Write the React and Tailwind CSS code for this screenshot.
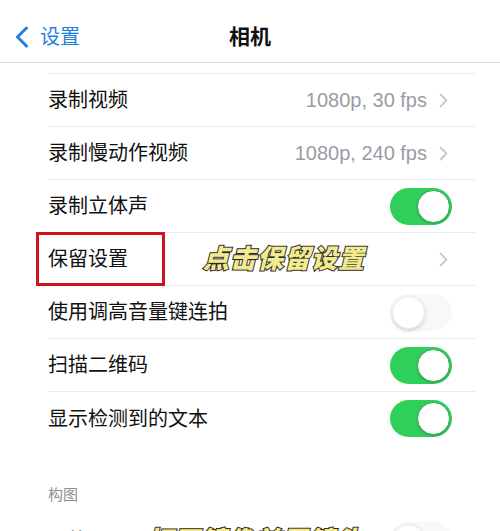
const Chevron = () => (
  <svg width="9" height="15" viewBox="0 0 9 15" className="ml-[12px] mr-[4px]">
    <path d="M1.5 1.5 L7.5 7.5 L1.5 13.5" fill="none" stroke="#c7c7cc" strokeWidth="1.8" strokeLinecap="round" strokeLinejoin="round" />
  </svg>
);

const Toggle = ({ on }) =>
  on ? (
    <div className="flex h-[37px] w-[62px] items-center justify-end rounded-full bg-[#2fd05a] p-[2px]">
      <div className="h-[33px] w-[33px] rounded-full border border-[#3aa560] bg-white shadow-[0_1px_2px_rgba(0,0,0,0.2)]" />
    </div>
  ) : (
    <div className="flex h-[37px] w-[62px] items-center justify-start rounded-full bg-[#f7f9f9] p-[2px]">
      <div className="h-[33px] w-[33px] rounded-full border border-[#ebebeb] bg-white shadow-[0_2px_4px_rgba(0,0,0,0.15)]" />
    </div>
  );

const Note = ({ children, className = "" }) => (
  <span
    className={
      "text-[26px] font-black italic leading-none tracking-[1px] text-[#f3ea8e] [-webkit-text-stroke:2px_#2a2a2a] [paint-order:stroke_fill] " +
      className
    }
  >
    {children}
  </span>
);

const rows = [
  { label: "录制视频", value: "1080p, 30 fps" },
  { label: "录制慢动作视频", value: "1080p, 240 fps" },
  { label: "录制立体声", toggle: true, on: true },
  { label: "保留设置", chevron: true, note: "点击保留设置", boxed: true },
  { label: "使用调高音量键连拍", toggle: true, on: false },
  { label: "扫描二维码", toggle: true, on: true },
  { label: "显示检测到的文本", toggle: true, on: true, last: true },
];

export default function App() {
  return (
    <div className="relative h-[531px] w-[500px] overflow-hidden bg-white font-['Liberation_Sans','Noto_Sans_CJK_SC',sans-serif] text-[#111]">
      <div className="relative flex h-[63px] items-center border-b border-[#dcdce0] pt-[11px]">
        <div className="flex items-center pl-[15px] text-[#1f7fdc]">
          <svg width="14" height="22" viewBox="0 0 14 22">
            <path d="M11.5 2 L2.5 11 L11.5 20" fill="none" stroke="#1f7fdc" strokeWidth="3" strokeLinecap="round" strokeLinejoin="round" />
          </svg>
          <span className="ml-[11px] text-[20px] leading-none">设置</span>
        </div>
        <div className="absolute left-0 right-0 text-center text-[21px] font-bold leading-none">相机</div>
      </div>

      <div className="ml-[48px] mr-[24px] mt-[10px] border-t border-[#ececef]">
        {rows.map((r) => (
          <div
            key={r.label}
            className={"relative flex h-[53px] items-center pr-[24px] " + (r.last ? "" : "border-b border-[#ececef]")}
          >
            <span className="text-[20px] leading-none">{r.label}</span>
            {r.note && <Note className="ml-[75px]">{r.note}</Note>}
            <div className="ml-auto flex items-center">
              {r.value && <span className="text-[20px] leading-none text-[#999ca3]">{r.value}</span>}
              {(r.value || r.chevron) && <Chevron />}
              {r.toggle && <Toggle on={r.on} />}
            </div>
            {r.boxed && (
              <div className="absolute left-[-12px] top-[-1px] h-[54px] w-[129px] border-[3px] border-[#d3111b]" />
            )}
          </div>
        ))}
      </div>

      <div className="ml-[48px] mt-[42px] text-[15px] leading-none text-[#8e8e93]">构图</div>

      <div className="ml-[48px] mr-[48px] mt-[12px] flex h-[53px] items-center">
        <span className="text-[20px] leading-none">网格</span>
        <Note className="ml-[58px]">打开镜像前置镜头</Note>
        <div className="ml-auto">
          <Toggle on={false} />
        </div>
      </div>
    </div>
  );
}
